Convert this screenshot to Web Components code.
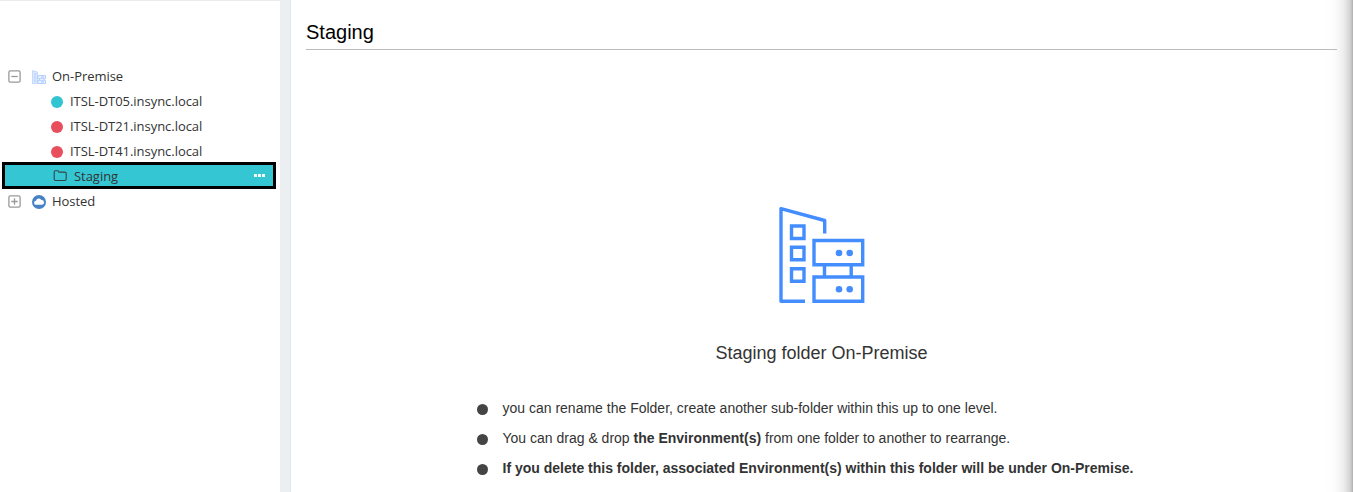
<!DOCTYPE html>
<html lang="en">
<head>
<meta charset="utf-8">
<title>Staging</title>
<style>
html,body{margin:0;height:100%;overflow:hidden;background:#fff;font-family:"Liberation Sans",Arial,sans-serif;color:#333}
</style>
</head>
<body>
<environment-page></environment-page>
<script>
function define(name, html) {
  customElements.define(name, class extends HTMLElement {
    constructor() {
      super();
      this.attachShadow({mode: 'open'}).innerHTML = html;
    }
  });
}

class TreeIcon extends HTMLElement {
  connectedCallback() {
    const icons = {
      minus: '<svg width="13" height="13" viewBox="0 0 13 13" fill="none" stroke="#999" stroke-width="1.3"><rect x=".9" y=".9" width="11.2" height="11.2" rx="1.4"/><path d="M3.3 6.5h6.4"/></svg>',
      plus: '<svg width="13" height="13" viewBox="0 0 13 13" fill="none" stroke="#999" stroke-width="1.3"><rect x=".9" y=".9" width="11.2" height="11.2" rx="1.4"/><path d="M3.3 6.5h6.4M6.5 3.3v6.4"/></svg>',
      site: '<svg width="14" height="14" viewBox="0 0 14 14"><path d="M.5 13.5V.6L5.5 2.1V13.5z" fill="#dce9ff" stroke="#c3d9ff"/><path d="M2.5 3.5H4V5H2.5zM2.5 6.7H4v1.5H2.5zM2.5 9.9H4v1.5H2.5z" fill="#fff" stroke="#b4d0ff" stroke-width=".8"/><path d="M6 5.5h7.5v3.2H6zM6 10.3h7.5v3.2H6zM7.5 8.7v1.6M12 8.7v1.6" fill="#edf4ff" stroke="#b4d0ff"/><path d="M9 7.1h3M9 11.9h3" stroke="#9cc2ff"/></svg>',
      cloud: '<svg width="14" height="14" viewBox="0 0 14 14"><circle cx="7" cy="7" r="7" fill="#4683c4"/><path d="M4.2 9.8a2 2 0 0 1-.2-4A2.9 2.9 0 0 1 9.4 5a2.4 2.4 0 0 1 .5 4.8z" fill="#fff"/></svg>',
      folder: '<svg width="14" height="12" viewBox="0 0 14 12" fill="none" stroke="#334448" stroke-width="1.1"><path d="M1.2 2.1Q1.2.8 2.4.8h2.3q.9 0 1.2 1.3h5.8q1.5 0 1.5 1.4v5.6q0 1.4-1.5 1.4H2.500q-1.300 0-1.300-1.400z"/></svg>',
      teal: '<svg width="12" height="12"><circle cx="6" cy="6" r="6" fill="#31c5d2"/></svg>',
      red: '<svg width="12" height="12"><circle cx="6" cy="6" r="6" fill="#e84e5c"/></svg>'
    };
    this.attachShadow({mode: 'open'}).innerHTML =
      '<style>:host{display:block;flex:none}svg{display:block}</style>' + icons[this.getAttribute('name')];
  }
}
customElements.define('tree-icon', TreeIcon);

define('tree-row', `<style>
:host{display:flex;align-items:center;box-sizing:border-box;height:25px;padding-left:8px;font:400 13px/24px "Open Sans","Noto Sans",sans-serif;color:#333;letter-spacing:-.04px;white-space:nowrap}
:host([leaf]){padding-left:51px}
.toggle{display:flex;width:24px;padding-top:1px}
:host([leaf]) .toggle{display:none}
.icon{display:flex;padding-top:2px}
.label{margin-left:6px}
:host([leaf]) .label{margin-left:7px}
:host([selected]){height:27px;margin:-1px 4px -1px 2px;padding-left:48px;padding-right:8px;border:3px solid #000;background:#35c6d4}
:host([selected]) .icon{padding-top:0}
.more{margin-left:auto;display:none}
:host([selected]) .more{display:block}
</style><span class="toggle"><slot name="toggle"></slot></span><span class="icon"><slot name="icon"></slot></span><span class="label"><slot></slot></span>
<svg class="more" width="11" height="3"><path d="M0 0h3v3H0zM4 0h3v3H4zM8 0h3v3H8z" fill="#f2fcfc"/></svg>`);

define('environment-tree', `<style>
:host{display:block;box-sizing:border-box;width:280px;padding-top:62px;border-top:1px solid #e9ecef;background:#fff}
</style>
<tree-row><tree-icon slot="toggle" name="minus"></tree-icon><tree-icon slot="icon" name="site"></tree-icon>On-Premise</tree-row>
<tree-row leaf><tree-icon slot="icon" name="teal"></tree-icon>ITSL-DT05.insync.local</tree-row>
<tree-row leaf><tree-icon slot="icon" name="red"></tree-icon>ITSL-DT21.insync.local</tree-row>
<tree-row leaf><tree-icon slot="icon" name="red"></tree-icon>ITSL-DT41.insync.local</tree-row>
<tree-row leaf selected><tree-icon slot="icon" name="folder"></tree-icon>Staging</tree-row>
<tree-row><tree-icon slot="toggle" name="plus"></tree-icon><tree-icon slot="icon" name="cloud"></tree-icon>Hosted</tree-row>`);

define('site-illustration', `<style>:host{display:block}svg{display:block}</style>
<svg width="88" height="98" viewBox="0 0 88 98" fill="none" stroke="#438dff" stroke-width="3.4">
<path d="M46.7 27.5V14.5L3 2.7V95.2H27" stroke-linejoin="round"/>
<path d="M13.5 20H26v12.500H13.500zM13.500 41.300H26v12.500H13.500zM13.500 62.800H26v12.500H13.500z"/>
<path d="M36 34.5h48.700v24.300H36zM36 71h48.700v24.200H36zM46.500 59v12M73.200 59v12"/>
<g fill="#438dff" stroke="none"><circle cx="61" cy="47" r="3.3"/><circle cx="71.700" cy="47" r="3.3"/><circle cx="61" cy="83.300" r="3.3"/><circle cx="71.700" cy="83.300" r="3.3"/></g></svg>`);

define('info-item', `<style>
:host{display:flex;align-items:center;height:30px;font-size:14px;line-height:30px;white-space:nowrap}
i{flex:none;width:11px;height:11px;border-radius:50%;background:#444;margin:2px 14.5px 0 0}
</style><i></i><span><slot></slot></span>`);

define('folder-details', `<style>
:host{display:block;box-sizing:border-box;flex:1;min-width:0;padding:19px 16px 0 15px;background:linear-gradient(to right,transparent 0,rgba(0,0,0,.008) 35%,rgba(0,0,0,.035) 53%,rgba(0,0,0,.075) 70%,rgba(0,0,0,.15) 86%,rgba(0,0,0,.21) 94%,rgba(0,0,0,.32)) right/30px 100% no-repeat #fff}
h1{margin:0;height:30px;font:400 20px/26px "Liberation Sans",Arial,sans-serif;color:#000;border-bottom:1px solid #bbb}
site-illustration{width:88px;margin:156px 0 0 472px}
h2{margin:35px 0 0;text-align:center;font:400 18px/28px "Liberation Sans",Arial,sans-serif;color:#333}
.list{margin:26px 0 0 171px}
</style>
<h1>Staging</h1>
<site-illustration></site-illustration>
<h2>Staging folder On-Premise</h2>
<div class="list">
<info-item>you can rename the Folder, create another sub-folder within this up to one level.</info-item>
<info-item>You can drag &amp; drop <b>the Environment(s)</b> from one folder to another to rearrange.</info-item>
<info-item><b>If you delete this folder, associated Environment(s) within this folder will be under On-Premise.</b></info-item>
</div>`);

define('environment-page', `<style>
:host{display:flex;height:492px;overflow:hidden}
.divider{box-sizing:border-box;width:11px;flex:none;background:#ebeff2;border-right:1px solid #e0e6ea}
environment-tree{flex:none}
</style><environment-tree></environment-tree><div class="divider"></div><folder-details></folder-details>`);
</script>
</body>
</html>
